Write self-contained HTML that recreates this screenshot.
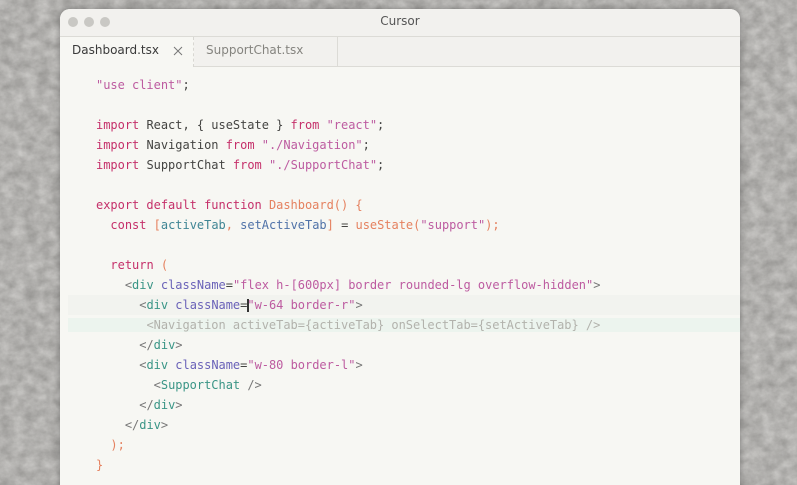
<!DOCTYPE html>
<html><head><meta charset="utf-8">
<style>
html,body{margin:0;padding:0;width:797px;height:485px;overflow:hidden;background:#b3b1ae}
#root{position:absolute;left:0;top:0;width:797px;height:485px;overflow:hidden}
#bg{position:absolute;left:0;top:0;width:797px;height:485px}
#win{position:absolute;left:60px;top:9px;width:680px;height:476px;background:#f7f7f3;border-radius:10px 10px 0 0;overflow:hidden}
#shadow{position:absolute;left:60px;top:9px;width:680px;height:490px;border-radius:10px 10px 0 0;box-shadow:0 0 7px rgba(50,50,50,.4)}
#title{position:absolute;left:0;top:0;width:680px;height:27px;background:#f2f1ee;border-bottom:1px solid #dcdbd6;font:12px/24px "DejaVu Sans",sans-serif;color:#555;text-align:center}
.dot{position:absolute;top:8px;width:10px;height:10px;border-radius:50%;background:#c9c8c4}
#tabs{position:absolute;left:0;top:28px;width:680px;height:29px;background:#f2f1ee;border-bottom:1px solid #dcdbd6}
.tab{position:absolute;top:0;height:29px;font:12px/26px "DejaVu Sans",sans-serif;box-sizing:border-box}
#t1{left:0;width:134px;height:30px;background:#f7f7f3;color:#3a3a3a;padding-left:12px;border-right:1px dashed #d8d7d2}
#t2{left:134px;width:144px;color:#85847f;padding-left:12px;border-right:1px solid #dcdbd6}
#x{position:absolute;left:113px;top:9px}
.hl{position:absolute}
pre{position:absolute;left:36px;top:66px;margin:0;font:12px/20px "DejaVu Sans Mono",monospace;letter-spacing:-.02px;color:#444442;white-space:pre}
.k{color:#c5306a}.s{color:#bd5ba0}.o{color:#e5815f}.a{color:#6a62b8}.t{color:#3a9586}.p{color:#777}.v{color:#3f8594}.b{color:#4f72a8}.g{color:#b2b2ac}
#cur{position:absolute;left:187px;top:290px;width:2px;height:13px;background:#333}
</style></head><body>
<div id="root">
<svg id="bg" xmlns="http://www.w3.org/2000/svg"><filter id="n" x="0" y="0" width="100%" height="100%" color-interpolation-filters="sRGB"><feTurbulence type="fractalNoise" baseFrequency="0.08 0.1" numOctaves="5" seed="4"/><feColorMatrix values=".24 0 0 0 .575  .24 0 0 0 .57  .24 0 0 0 .56  0 0 0 0 1"/></filter><rect width="797" height="485" filter="url(#n)"/></svg>
<div id="shadow"></div>
<div id="win">
<div id="title">Cursor<span class="dot" style="left:8px"></span><span class="dot" style="left:24px"></span><span class="dot" style="left:40px"></span></div>
<div id="tabs">
<div class="tab" id="t1">Dashboard.tsx<svg id="x" width="10" height="10" viewBox="0 0 10 10"><path d="M1 1L9 9M9 1L1 9" stroke="#777" stroke-width="1" fill="none"/></svg></div>
<div class="tab" id="t2">SupportChat.tsx</div>
</div>
<div class="hl" style="left:8px;top:286px;width:672px;height:20px;background:#f2f3ef"></div>
<div class="hl" style="left:8px;top:309px;width:672px;height:14px;background:#ecf4ee"></div>
<pre><span class="s">"use client"</span>;

<span class="k">import</span> React, { useState } <span class="k">from</span> <span class="s">"react"</span>;
<span class="k">import</span> Navigation <span class="k">from</span> <span class="s">"./Navigation"</span>;
<span class="k">import</span> SupportChat <span class="k">from</span> <span class="s">"./SupportChat"</span>;

<span class="k">export default function</span> <span class="o">Dashboard() {</span>
  <span class="k">const</span> <span class="o">[</span><span class="v">activeTab</span><span class="o">,</span> <span class="b">setActiveTab</span><span class="o">]</span> = <span class="o">useState(</span><span class="s">"support"</span><span class="o">);</span>

  <span class="k">return</span> <span class="o">(</span>
    <span class="p">&lt;</span><span class="t">div</span> <span class="a">className</span>=<span class="s">"flex h-[600px] border rounded-lg overflow-hidden"</span><span class="p">&gt;</span>
      <span class="p">&lt;</span><span class="t">div</span> <span class="a">className</span>=<span class="s">"w-64 border-r"</span><span class="p">&gt;</span>
       <span class="g">&lt;Navigation activeTab={activeTab} onSelectTab={setActiveTab} /&gt;</span>
      <span class="p">&lt;/</span><span class="t">div</span><span class="p">&gt;</span>
      <span class="p">&lt;</span><span class="t">div</span> <span class="a">className</span>=<span class="s">"w-80 border-l"</span><span class="p">&gt;</span>
        <span class="p">&lt;</span><span class="t">SupportChat</span> <span class="p">/&gt;</span>
      <span class="p">&lt;/</span><span class="t">div</span><span class="p">&gt;</span>
    <span class="p">&lt;/</span><span class="t">div</span><span class="p">&gt;</span>
  <span class="o">);</span>
<span class="o">}</span></pre>
<div id="cur"></div>
</div>
</div>
</body></html>
